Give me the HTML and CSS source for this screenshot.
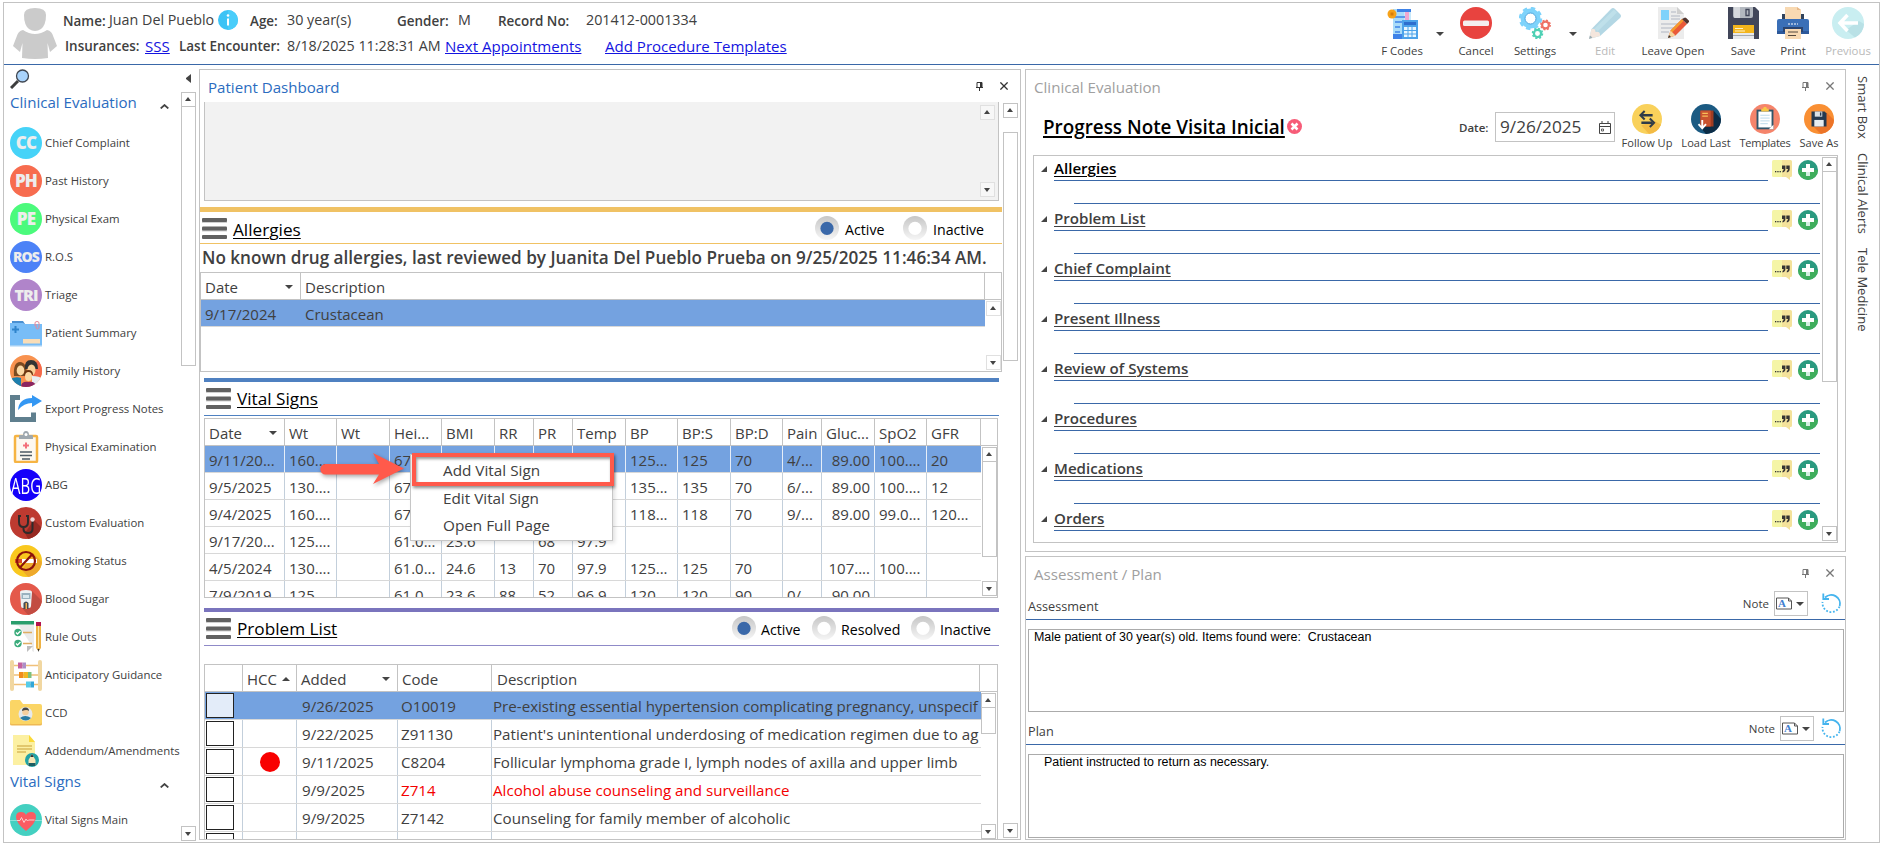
FILE: index.html
```html
<!DOCTYPE html>
<html lang="en">
<head>
<meta charset="utf-8">
<title>Patient Record</title>
<link rel="stylesheet" href="styles.css">
</head>
<body>
<svg width="0" height="0" class="defs">
  <defs>
    <linearGradient id="rg" x1="0" y1="0" x2="0" y2="1"><stop offset="0" stop-color="#c6c6c6"/><stop offset="1" stop-color="#f6f6f6"/></linearGradient>
    <clipPath id="cc"><circle cx="16" cy="16" r="16"/></clipPath>
    <symbol id="pin" viewBox="0 0 7 9"><path d="M1 .5h5v5H1zM0 5.5h7M3.5 5.5V9" fill="none" stroke="currentColor"/><path d="M4 0h2v5H4z" fill="currentColor"/></symbol>
    <symbol id="x" viewBox="0 0 8 8"><path d="M.4.4l7.2 7.2M7.6.4L.4 7.6" stroke="currentColor" stroke-width="1.3"/></symbol>
    <symbol id="ham" viewBox="0 0 25 21"><g fill="#d0d0d0"><rect y="3" width="25" height="2"/><rect y="11.5" width="25" height="2"/></g><g fill="#616161"><rect width="25" height="4" rx="1"/><rect y="8.5" width="25" height="4" rx="1"/><rect y="17" width="25" height="4" rx="1"/></g></symbol>
    <symbol id="on" viewBox="0 0 24 24"><circle cx="12" cy="12" r="12" fill="url(#rg)"/><circle cx="12" cy="12.4" r="6.6" fill="#3a68a9"/></symbol>
    <symbol id="off" viewBox="0 0 24 24"><circle cx="12" cy="12" r="12" fill="url(#rg)"/><circle cx="12" cy="12.4" r="6.6" fill="#fff"/></symbol>
    <symbol id="note" viewBox="0 0 20 20"><path d="M1.5 0H10v17H1.500Q0 17 0 15.500V1.500Q0 0 1.500 0z" fill="#f5f5a6"/><path d="M10 0h8.500Q20 0 20 1.500v14Q20 17 18.500 17H18v3l-4-3h-4z" fill="#f4e29b"/><g fill="#333"><rect x="3" y="11" width="1.300" height="1.300"/><rect x="5.300" y="11" width="1.300" height="1.300"/><rect x="7.600" y="11" width="1.300" height="1.300"/><path d="M10 5.500h3.400v3.500q0 3-2.900 3.400v-1.500q1.200-.3 1.200-1.800H10zM14.300 5.500h3.400v3.500q0 3-2.900 3.400v-1.500q1.200-.3 1.200-1.800h-1.700z"/></g></symbol>
    <symbol id="plus" viewBox="0 0 20 20"><circle cx="10" cy="10" r="10" fill="#2a9a80"/><path d="M0 10a10 10 0 0 0 20 0z" fill="#3fae5c"/><path d="M8 4h4v4h4v4h-4v4H8v-4H4V8h4z" fill="#fff"/><path d="M8 12h4v4H8z" fill="#d5efe0"/></symbol>
    <symbol id="undo" viewBox="0 0 21 21"><path d="M4 4.500A8.800 8.800 0 0 1 18.700 13" fill="none" stroke="#45b4ee" stroke-width="1.800"/><path d="M18.500 13.500A8.800 8.800 0 0 1 1.600 9" fill="none" stroke="#45b4ee" stroke-width="1.800" stroke-dasharray="1.800 1.700"/><path d="M2.300.500V6H8" fill="none" stroke="#45b4ee" stroke-width="1.800"/></symbol>
    <symbol id="doc" viewBox="0 0 16 12"><path d="M.5.500h12l3 3v8H.500z" fill="#fff" stroke="#555"/><path d="M12.500.500v3h3" fill="none" stroke="#555"/></symbol>
  </defs>
</svg>

<div class="frame">
  <header class="top">
    <svg class="avatar" viewBox="0 0 44 51"><path d="M11 7Q11 0 22 0t11 7q0 10-5 14-6 4-12 0-5-4-5-14z" fill="#cbcbcb"/><path d="M10 22q12 8 24 0 5 1 6.500 7L44 38l-7 6-2.500-9 .5 15q-13 2-26 0l.5-15L7 44l-7-6 3.500-9Q5 23 10 22z" fill="#cbcbcb"/></svg>
    <div class="who">
      <div class="wline l1">
        <b class="n1">Name:</b><span class="n2">Juan Del Pueblo</span>
        <svg class="info" viewBox="0 0 20 20"><circle cx="10" cy="10" r="10" fill="#3cc3f5"/><path d="M10 0a10 10 0 0 1 0 20z" fill="#49cdfa"/><circle cx="10" cy="5.500" r="1.300" fill="#fff"/><path d="M9 8.500h2v7H9z" fill="#fff"/></svg>
        <b class="n3">Age:</b><span class="n4">30 year(s)</span><b class="n5">Gender:</b><span class="n6">M</span><b class="n7">Record No:</b><span class="n8">201412-0001334</span>
      </div>
      <div class="wline l2">
        <b class="m1">Insurances:</b><a class="m2">SSS</a><b class="m3">Last Encounter:</b><span class="m4">8/18/2025 11:28:31 AM</span><a class="m5">Next Appointments</a><a class="m6">Add Procedure Templates</a>
      </div>
    </div>
    <nav class="tools">
      <div class="tool t1"><svg viewBox="0 0 32 32"><path d="M7 2h18v30H7z" fill="#c7e9fb"/><path d="M7 2h11v28H7z" fill="#a9dcf9"/><path d="M11 2h14v3H11z" fill="#3e82e8"/><path d="M9 10h10M9 15h8M9 20h5M9 25h5" stroke="#3e82e8" stroke-width="1.500"/><path d="M19 5h4v10h-4z" fill="#f0a7d0"/><path d="M7 27h10v5H7z" fill="#3e82e8"/><circle cx="6" cy="7" r="4.500" fill="#f6a21a"/><path d="M4.500 5.500h3v3h-3z" fill="#d97d06"/><path d="M16 13h16v19H16z" fill="#4da3ea"/><path d="M18 15h12v3H18z" fill="#2e6fce"/><path d="M18 20h12v10H18z" fill="#e8f7ff"/><path d="M22 20v10M26 20v10M18 23.500h12M18 27h12" stroke="#4da3ea"/></svg><span>F Codes</span></div>
      <i class="dd"></i>
      <div class="tool t2"><svg viewBox="0 0 32 32"><circle cx="16" cy="16" r="16" fill="#e8433f"/><rect x="3" y="13.500" width="26" height="5.500" rx="1.500" fill="#f4efef"/></svg><span>Cancel</span></div>
      <div class="tool t3"><svg viewBox="0 0 32 32"><circle cx="11.500" cy="11.500" r="7.500" fill="none" stroke="#7ed3fb" stroke-width="5"/><circle cx="11.500" cy="11.500" r="10.300" fill="none" stroke="#7ed3fb" stroke-width="2.800" stroke-dasharray="4.400 3.690"/><circle cx="11.500" cy="11.500" r="5.500" fill="#fff" stroke="#4ea4dd"/><circle cx="26.500" cy="18" r="3.400" fill="none" stroke="#ee7164" stroke-width="2.200"/><circle cx="26.500" cy="18" r="4.700" fill="none" stroke="#ee7164" stroke-width="1.500" stroke-dasharray="1.900 1.791"/><circle cx="18.500" cy="26.500" r="3.600" fill="none" stroke="#4ed0b4" stroke-width="2.300"/><circle cx="18.500" cy="26.500" r="5" fill="none" stroke="#4ed0b4" stroke-width="1.500" stroke-dasharray="2 1.927"/></svg><span>Settings</span></div>
      <i class="dd"></i>
      <div class="tool t4 off"><svg viewBox="0 0 32 32"><path d="M0 32l2.500-10L22 2q2-2 4 0l5 5q2 2 0 4L11 29z" fill="#b3d7e4"/><path d="M5 22L25 2.500l3 3L9 24z" fill="#bfe0ea"/><path d="M0 32l2.500-10q4-1 4 3 5-1 4.500 4z" fill="#f4e6dd"/><path d="M0 32l1-3.500 2.500 2z" fill="#9badb5"/></svg><span>Edit</span></div>
      <div class="tool t5"><svg viewBox="0 0 32 32"><path d="M1 0h19l7 7v25H1z" fill="#ececec"/><path d="M20 0l7 7h-7z" fill="#cfcfcf"/><path d="M4 3h8v10H4z" fill="#7fd2fb"/><path d="M14 5h5M14 9h9M14 12h9M4 17h18M4 21h14M4 25h8" stroke="#c3c7cf" stroke-width="1.300"/><path d="M11 31l2.500-7.500L25 12l5 5-11.500 11.500z" fill="#ea5a3a"/><path d="M13.500 23.500L25 12l1.700 1.700L15 25.500z" fill="#f59b2c"/><path d="M25 12l2-1q1-1 2.200 0l2.300 2.300q1.200 1 0 2.300L30 17z" fill="#50342f"/><path d="M11 31l2.500-7.500 5 5z" fill="#f6d59b"/><path d="M11 31l1-3 2 2z" fill="#333"/></svg><span>Leave Open</span></div>
      <div class="tool t6"><svg viewBox="0 0 32 32"><path d="M1 0h27l4 4v28H1z" fill="#414659"/><path d="M6 0h20v9q0 2-2 2H8q-2 0-2-2z" fill="#b3b8bf"/><path d="M7 0h6v11H8q-1 0-1-1z" fill="#d6d9dd"/><path d="M19 2.500h3v6h-3z" fill="none" stroke="#414659" stroke-width="1.300"/><path d="M6 18h21v8H6z" fill="#f3b51c"/><path d="M8 21.500h8M8 24h10" stroke="#fff3c8" stroke-width="1"/><path d="M6 26h21v6H6z" fill="#e7e9ec"/><path d="M6 28h21v1H6z" fill="#a5a9b0"/></svg><span>Save</span></div>
      <div class="tool t7"><svg viewBox="0 0 32 32"><path d="M8 0h12l4 3v10H8z" fill="#f8d9b2"/><path d="M20 0l4 3h-4z" fill="#e8b98a"/><path d="M5 7h3v6H5zM24 7h3v6h-3z" fill="#31435c"/><path d="M2 12h28q2 0 2 2v13H0V14q0-2 2-2z" fill="#3a6fb7"/><path d="M0 24h32v3H0z" fill="#2d589a"/><path d="M6 20h20v5H6z" fill="#2a4470"/><path d="M11 17h10" stroke="#fff" stroke-dasharray="2 1"/><path d="M8 22h16v10H8z" fill="#f8d9b2"/><path d="M11 25h10M11 28.500h8" stroke="#54493f" stroke-width="1"/></svg><span>Print</span></div>
      <div class="tool t8 off"><svg viewBox="0 0 32 32"><circle cx="16" cy="16" r="16" fill="#c9eef1"/><path d="M14 23l9 7.500A16 16 0 0 0 32 17l-5-3z" fill="#b9e1e6"/><path d="M26 16H8M15.500 8L8 16l7.500 8" fill="none" stroke="#fff" stroke-width="3.500"/></svg><span>Previous</span></div>
    </nav>
  </header>

  <main class="main">
    <aside class="side">
      <div class="list">
        <svg class="mag" viewBox="0 0 20 20"><path d="M1 19l7-7" stroke="#3d3d3d" stroke-width="3"/><circle cx="12.500" cy="7" r="6" fill="#a9d3fb" stroke="#3f4650" stroke-width="1.300"/></svg>
        <div class="sh h1"><span>Clinical Evaluation</span><svg viewBox="0 0 9 5"><path d="M.7 4.500L4.500 1l3.800 3.500" fill="none" stroke="#444" stroke-width="1.700"/></svg></div>
        <div class="it"><em class="ba c1">CC</em>Chief Complaint</div>
        <div class="it"><em class="ba c2">PH</em>Past History</div>
        <div class="it"><em class="ba c3">PE</em>Physical Exam</div>
        <div class="it"><em class="ba c4">ROS</em>R.O.S</div>
        <div class="it"><em class="ba c5">TRI</em>Triage</div>
        <div class="it"><svg viewBox="0 0 32 32"><path d="M2 4h11l2 3H2z" fill="#4a90d2"/><path d="M0 6h13l2 1h17v22H0z" fill="#78bdf7"/><path d="M0 28h32v1.500H0z" fill="#a4d0f5"/><path d="M2 12.500h7M5.500 9v7" stroke="#2f84cc" stroke-width="2"/><path d="M13 22h17v4.500H13z" fill="#f9ddb7"/><path d="M25 9V6q0-1.500 2-1.500T29 6v4q0 2-1.500 2T26 10V7" fill="none" stroke="#e8899a"/></svg>Patient Summary</div>
        <div class="it"><svg viewBox="0 0 32 32"><g clip-path="url(#cc)"><path d="M0 0h32v32H0z" fill="#f8924f"/><path d="M32 0v22H14z" fill="#f5694b"/><path d="M0 24q6-3 11-1v9H0z" fill="#1c7fae"/><path d="M22 21q8 0 10 3v8H22z" fill="#e8eef2"/><path d="M4 21q-1-14 6-14t7 14z" fill="#7b4a20"/><ellipse cx="10.500" cy="15.500" rx="3.800" ry="5" fill="#fbd9a4"/><path d="M15 14q-1-9 6-9t7 9z" fill="#333"/><ellipse cx="21.500" cy="15" rx="4" ry="5.500" fill="#f9cf96"/><path d="M14 20q0-5 4.500-5t4.500 5z" fill="#6b3510"/><ellipse cx="18.500" cy="21.500" rx="3.500" ry="4.500" fill="#fbd9a4"/><path d="M11 32q0-6 7.500-5 7-1 7.500 5z" fill="#8c2561"/></g></svg>Family History</div>
        <div class="it"><svg viewBox="0 0 32 32"><path d="M10 4.500H2.500v22h21v-7" fill="none" stroke="#5f7f8e" stroke-width="5"/><path d="M8 17Q9 5 22 5V2l10 6-10 6v-4q-8 0-14 7z" fill="#3397f3"/></svg>Export Progress Notes</div>
        <div class="it"><svg viewBox="0 0 32 32"><rect x="5" y="5" width="22" height="26" rx="1" fill="#fdf8f0" stroke="#f6b443" stroke-width="2.500"/><path d="M9 8V5q0-1 1-1h3q0-4 3-4t3 4h3q1 0 1 1v3z" fill="#9fa8ae"/><circle cx="16" cy="3.500" r="1.500" fill="#fff"/><path d="M13 14.500h6M16 11.500v6" stroke="#f3707a" stroke-width="2"/><path d="M10 21h12M10 24.500h12M12 28h8" stroke="#4d5a63" stroke-width="1.300"/></svg>Physical Examination</div>
        <div class="it"><em class="ba c6"><span>ABG</span></em>ABG</div>
        <div class="it"><svg viewBox="0 0 32 32"><g clip-path="url(#cc)"><path d="M0 0h32v32H0z" fill="#bd3a30"/><path d="M24 13l8 8v11H18l-3-6z" fill="#962922"/></g><path d="M11 9H9v6q0 5 4.500 5T18 15V9h-2M13.500 20v2q0 4 4.500 4t4.500-4v-8" fill="none" stroke="#2f2b2b" stroke-width="2"/><circle cx="22.500" cy="12.500" r="2.200" fill="#f2d5d5"/></svg>Custom Evaluation</div>
        <div class="it"><svg viewBox="0 0 32 32"><g clip-path="url(#cc)"><path d="M0 0h32v32H0z" fill="#f9c81f"/><path d="M23 8l9 9v15H18l-6-7z" fill="#eea92c"/></g><path d="M5 14h7v4H5z" fill="#d94a25"/><path d="M12 14h15v4H12z" fill="#fff"/><circle cx="16" cy="16" r="9" fill="none" stroke="#8c130b" stroke-width="2.200"/><path d="M22 9.500L10 22.500" stroke="#8c130b" stroke-width="2.200"/></svg>Smoking Status</div>
        <div class="it"><svg viewBox="0 0 32 32"><g clip-path="url(#cc)"><path d="M0 0h32v32H0z" fill="#e4594b"/><path d="M22 8l10 10v14H18l-6-7z" fill="#c24c42"/></g><path d="M10 9q0-2 6-2t6 2l-1 14q0 2-2 2h-6q-2 0-2-2z" fill="#eef1f3"/><path d="M11.500 10h9v6h-9z" fill="#99b1bf"/><path d="M13 12h6v3h-6z" fill="#dbe8ee"/><path d="M13.500 26v-6q2.500-3 5 0v6z" fill="#454b53"/><path d="M15.500 20h1.500v6h-1.500z" fill="#f4b04e"/></svg>Blood Sugar</div>
        <div class="it"><svg viewBox="0 0 32 32"><path d="M2 3h22v28l-2-1V25L9 5z" fill="#ebebeb"/><path d="M1 0h23v3.500H1z" fill="#2a9e6d"/><circle cx="8" cy="11.500" r="3.700" fill="#3bac7c"/><circle cx="8" cy="22.500" r="3.700" fill="#3bac7c"/><path d="M6 11.500l1.500 1.500 3-3M6 22.500L7.500 24l3-3" fill="none" stroke="#fff" stroke-width="1.300"/><path d="M13 11.500h9M13 22.500h9" stroke="#e0ad61" stroke-width="1.500"/><path d="M17 25h6l-6 6z" fill="#bdbdbd"/><path d="M26 5h5v22l-2.500 3L26 27z" fill="#eeb244"/><path d="M28 5h1v22h-1z" fill="#fbe3a2"/><path d="M26 1h5v4h-5z" fill="#b4144f"/><path d="M27.500 28h2l-1 3z" fill="#333"/></svg>Rule Outs</div>
        <div class="it"><svg viewBox="0 0 32 32"><path d="M3 6.500h26M3 16h26M3 25.500h26" stroke="#f0c079" stroke-width="1.500"/><rect y="1" width="4" height="31" rx="2" fill="#f1d7a1"/><rect x="28" y="1" width="4" height="31" rx="2" fill="#f1d7a1"/><path d="M8 3.500h4.500v6H8z" fill="#c5619f"/><path d="M12.500 3.500H16v6h-3.500z" fill="#ad8fc8"/><path d="M9 13h4.500v6H9z" fill="#f08c1e"/><path d="M13.500 13H18v6h-4.500z" fill="#f2b722"/><path d="M18 13h3.500v6H18z" fill="#7dc07e"/><path d="M16 22.500h4.500v6H16z" fill="#57cbe8"/><path d="M20.500 22.500H24v6h-3.500z" fill="#33a7d8"/></svg>Anticipatory Guidance</div>
        <div class="it"><svg viewBox="0 0 32 32"><path d="M0 5q0-2 2-2h8l3 4h17q2 0 2 2v17q0 2-2 2H2q-2 0-2-2z" fill="#fbd565"/><path d="M0 25q0 2 2 2h28q2 0 2-2v2q0 1.500-2 1.500H2Q0 28.500 0 27z" fill="#eeb954"/><circle cx="15.500" cy="17" r="7" fill="#e6e8ea"/><path d="M10 21q5-4 11 0-5 5-11 0z" fill="#2b7ba3"/><circle cx="15.500" cy="15" r="3.300" fill="#f7cf9e"/><path d="M12 14q0-3.500 3.500-3.500T19 14q-2-2-7 0z" fill="#444"/></svg>CCD</div>
        <div class="it"><svg viewBox="0 0 32 32"><path d="M3 0h16l6 7v23H3z" fill="#fcf0a2"/><path d="M19 0l6 7h-6z" fill="#fbd937"/><path d="M7 11h15M7 14h15M7 17h9" stroke="#d9bb5c" stroke-width="1.400"/><circle cx="22" cy="25" r="7" fill="#22a3a6"/><path d="M22 19l3.500 6v6h-7v-6z" fill="#f6e6b6"/><path d="M22 19l1.700 3h-3.400z" fill="#333"/><path d="M18.500 28h7v3h-7z" fill="#1b5d62"/></svg>Addendum/Amendments</div>
        <div class="sh h2"><span>Vital Signs</span><svg viewBox="0 0 9 5"><path d="M.7 4.500L4.500 1l3.800 3.500" fill="none" stroke="#444" stroke-width="1.700"/></svg></div>
        <div class="it last"><svg viewBox="0 0 32 32"><circle cx="16" cy="16" r="16" fill="#44d0c1"/><path d="M0 16.500h32" stroke="#8be3da"/><path d="M16 27Q6 19 6 13q0-5 5-5 4 0 5 3 1-3 5-3 5 0 5 5 0 6-10 14z" fill="#fb5b62"/><path d="M7 16.500h3l1.500-3 2.500 5 2-3.500 1.500 2 1-1h6" fill="none" stroke="#fbd0d0"/></svg>Vital Signs Main</div>
      </div>
      <div class="sscroll"><i class="tri-l"></i><div class="sb sb1"><i class="up"></i><i class="th"></i><i class="sp"></i><i class="dn"></i></div></div>
    </aside>

    <section class="panel dash">
      <div class="ttl blue"><span>Patient Dashboard</span><svg class="pin"><use href="#pin"/></svg><svg class="x"><use href="#x"/></svg></div>
      <div class="dbody">
        <div class="dcol">
          <div class="gray"><div class="sb lt"><i class="up"></i><i class="sp"></i><i class="dn"></i></div></div>

          <div class="sec al">
            <div class="shd"><svg class="ham"><use href="#ham"/></svg><span class="st">Allergies</span>
              <svg class="rd r1"><use href="#on"/></svg><span class="rl">Active</span><svg class="rd r2"><use href="#off"/></svg><span class="rl">Inactive</span></div>
            <div class="nka">No known drug allergies, last reviewed by Juanita Del Pueblo Prueba on 9/25/2025 11:46:34 AM.</div>
            <div class="grid ga">
              <div class="gr gh"><span>Date<i class="ar d"></i></span><span>Description</span><span class="e"></span></div>
              <div class="gbody"><div class="gmain"><div class="gr sel"><span>9/17/2024</span><span>Crustacean</span></div></div>
              <div class="sb lt"><i class="up"></i><i class="sp"></i><i class="dn"></i></div></div>
            </div>
          </div>

          <div class="sec vi">
            <div class="shd"><svg class="ham"><use href="#ham"/></svg><span class="st">Vital Signs</span></div>
            <div class="grid gv">
              <div class="gr gh"><span>Date<i class="ar d"></i></span><span>Wt</span><span>Wt</span><span>Hei...</span><span>BMI</span><span>RR</span><span>PR</span><span>Temp</span><span>BP</span><span>BP:S</span><span>BP:D</span><span>Pain</span><span>Gluc...</span><span>SpO2</span><span>GFR</span><span class="e"></span></div>
              <div class="gbody"><div class="gmain">
                <div class="gr sel"><span>9/11/20...</span><span>160....</span><span></span><span>67</span><span></span><span></span><span></span><span></span><span>125...</span><span>125</span><span>70</span><span>4/...</span><span class="r">89.00</span><span>100....</span><span>20</span></div>
                <div class="gr"><span>9/5/2025</span><span>130....</span><span></span><span>67</span><span></span><span></span><span></span><span></span><span>135...</span><span>135</span><span>70</span><span>6/...</span><span class="r">89.00</span><span>100....</span><span>12</span></div>
                <div class="gr"><span>9/4/2025</span><span>160....</span><span></span><span>67</span><span></span><span></span><span></span><span></span><span>118...</span><span>118</span><span>70</span><span>9/...</span><span class="r">89.00</span><span>99.0...</span><span>120...</span></div>
                <div class="gr"><span>9/17/20...</span><span>125....</span><span></span><span>61.0...</span><span>23.6</span><span></span><span>68</span><span>97.9</span><span></span><span></span><span></span><span></span><span></span><span></span><span></span></div>
                <div class="gr"><span>4/5/2024</span><span>130....</span><span></span><span>61.0...</span><span>24.6</span><span>13</span><span>70</span><span>97.9</span><span>125...</span><span>125</span><span>70</span><span></span><span class="r">107....</span><span>100....</span><span></span></div>
                <div class="gr"><span>7/9/2019</span><span>125....</span><span></span><span>61.0...</span><span>23.6</span><span>88</span><span>52</span><span>96.9</span><span>120...</span><span>120</span><span>90</span><span>0/...</span><span class="r">90.00</span><span></span><span></span></div>
              </div>
              <div class="sb"><i class="up"></i><i class="th"></i><i class="sp"></i><i class="dn"></i></div></div>
              <div class="menu"><div>Add Vital Sign</div><div>Edit Vital Sign</div><div>Open Full Page</div></div>
              <div class="hl"></div>
              <svg class="arrow" viewBox="0 0 86 36"><path d="M6.500 12H60L54 1l31 15.500L54 32l6-9.500H6.500a5.250 5.250 0 0 1 0-10.500z" fill="#ff5a4b"/></svg>
            </div>
          </div>

          <div class="sec pr">
            <div class="shd"><svg class="ham"><use href="#ham"/></svg><span class="st">Problem List</span>
              <svg class="rd r1"><use href="#on"/></svg><span class="rl a">Active</span><svg class="rd r2"><use href="#off"/></svg><span class="rl b">Resolved</span><svg class="rd r3"><use href="#off"/></svg><span class="rl">Inactive</span></div>
            <div class="grid gp">
              <div class="gr gh"><span></span><span>HCC<i class="ar u"></i></span><span>Added<i class="ar d"></i></span><span>Code</span><span>Description</span><span class="e"></span></div>
              <div class="gbody"><div class="gmain">
                <div class="gr sel"><span><i class="cb"></i></span><span></span><span>9/26/2025</span><span>O10019</span><span>Pre-existing essential hypertension complicating pregnancy, unspecif</span></div>
                <div class="gr"><span><i class="cb"></i></span><span></span><span>9/22/2025</span><span>Z91130</span><span>Patient's unintentional underdosing of medication regimen due to ag</span></div>
                <div class="gr"><span><i class="cb"></i></span><span><i class="dot"></i></span><span>9/11/2025</span><span>C8204</span><span>Follicular lymphoma grade I, lymph nodes of axilla and upper limb</span></div>
                <div class="gr red"><span><i class="cb"></i></span><span></span><span class="k">9/9/2025</span><span>Z714</span><span>Alcohol abuse counseling and surveillance</span></div>
                <div class="gr"><span><i class="cb"></i></span><span></span><span>9/9/2025</span><span>Z7142</span><span>Counseling for family member of alcoholic</span></div>
                <div class="gr"><span><i class="cb"></i></span><span></span><span></span><span></span><span></span></div>
              </div>
              <div class="sb"><i class="up"></i><i class="th"></i><i class="sp"></i><i class="dn"></i></div></div>
            </div>
          </div>
        </div>
        <div class="sb dsb"><i class="up"></i><i class="th"></i><i class="sp"></i><i class="dn"></i></div>
      </div>
    </section>

    <div class="right">
      <section class="panel ev">
        <div class="ttl"><span>Clinical Evaluation</span><svg class="pin"><use href="#pin"/></svg><svg class="x"><use href="#x"/></svg></div>
        <div class="ehead">
          <span class="pn">Progress Note Visita Inicial</span>
          <svg class="del" viewBox="0 0 15 15"><circle cx="7.500" cy="7.500" r="7.500" fill="#f75c78"/><path d="M4.500 4.500l6 6M10.500 4.500l-6 6" stroke="#fff" stroke-width="2.500"/></svg>
          <span class="dl">Date:</span>
          <span class="din">9/26/2025<svg viewBox="0 0 12 13"><path d="M.5 2.500h11v10H.500zM.5 5.500h11M3 0v3M9 0v3" fill="none" stroke="#444"/><path d="M2.500 8h2v2h-2z" fill="none" stroke="#444" stroke-width=".8"/></svg></span>
          <div class="eb e1"><svg viewBox="0 0 32 32"><circle cx="16" cy="16" r="16" fill="#f9d15b"/><path d="M24 18l7 4q-4 9-13 10l-8-9z" fill="#f3bb44"/><path d="M10 12h12M10 20h12" stroke="#2f3b48" stroke-width="2.500"/><path d="M13.500 7.500L9 12l4.500 4.500M19 15.500l4.500 4.500-4.500 4.500" fill="none" stroke="#2f3b48" stroke-width="2.200"/></svg><span>Follow Up</span></div>
          <div class="eb e2"><svg viewBox="0 0 32 32"><circle cx="16" cy="16" r="16" fill="#1b5a82"/><path d="M24 7l8 9A16 16 0 0 1 16 32l-6-7z" fill="#0c2c46"/><path d="M10 7h14v17H10z" fill="#a03c22"/><path d="M10 7h11v17H10z" fill="#c9532f"/><path d="M12 10h6M12 13h6" stroke="#f6bf5a" stroke-width="1.300"/><path d="M12 17v8M8 21.500l4 4.500 4-4.500" fill="none" stroke="#fff" stroke-width="2"/></svg><span>Load Last</span></div>
          <div class="eb e3"><svg viewBox="0 0 32 32"><circle cx="16" cy="16" r="16" fill="#f5846b"/><path d="M7 6h18v21H7z" fill="#31556b"/><path d="M9 8h14v17H9z" fill="#fff"/><path d="M11 12h10M11 15h10M11 18h10M11 21h8" stroke="#b9d9ea"/><path d="M12 8V5h2q0-2 2-2t2 2h2v3z" fill="#f9c846"/><path d="M20 27l5-5v5z" fill="#fff"/></svg><span>Templates</span></div>
          <div class="eb e4"><svg viewBox="0 0 32 32"><circle cx="16" cy="16" r="16" fill="#f98f33"/><path d="M24 9l8 8A16 16 0 0 1 18 32l-9-9z" fill="#ec7428"/><path d="M8 8h14l2 2v14H8z" fill="#26394f"/><path d="M11.500 8h8v5.500h-8z" fill="#d9e0e6"/><path d="M17 9h1.500v3.500H17z" fill="#26394f"/><path d="M11 17h10v7H11z" fill="#e8edf0"/></svg><span>Save As</span></div>
        </div>
        <div class="tree">
          <div class="rows">
            <div class="nd"><div class="nr"><i class="tg"></i><b class="blk">Allergies</b><svg><use href="#note"/></svg><svg><use href="#plus"/></svg></div></div>
            <div class="nd"><div class="nr"><i class="tg"></i><b>Problem List</b><svg><use href="#note"/></svg><svg><use href="#plus"/></svg></div></div>
            <div class="nd"><div class="nr"><i class="tg"></i><b>Chief Complaint</b><svg><use href="#note"/></svg><svg><use href="#plus"/></svg></div></div>
            <div class="nd"><div class="nr"><i class="tg"></i><b>Present Illness</b><svg><use href="#note"/></svg><svg><use href="#plus"/></svg></div></div>
            <div class="nd"><div class="nr"><i class="tg"></i><b>Review of Systems</b><svg><use href="#note"/></svg><svg><use href="#plus"/></svg></div></div>
            <div class="nd"><div class="nr"><i class="tg"></i><b>Procedures</b><svg><use href="#note"/></svg><svg><use href="#plus"/></svg></div></div>
            <div class="nd"><div class="nr"><i class="tg"></i><b>Medications</b><svg><use href="#note"/></svg><svg><use href="#plus"/></svg></div></div>
            <div class="nd"><div class="nr"><i class="tg"></i><b>Orders</b><svg><use href="#note"/></svg><svg><use href="#plus"/></svg></div></div>
          </div>
          <div class="sb"><i class="up"></i><i class="th"></i><i class="sp"></i><i class="dn"></i></div>
        </div>
      </section>

      <section class="panel ap">
        <div class="ttl"><span>Assessment / Plan</span><svg class="pin"><use href="#pin"/></svg><svg class="x"><use href="#x"/></svg></div>
        <div class="arow"><span class="an">Assessment</span><span class="nt">Note</span><span class="nb"><span class="dA"><svg><use href="#doc"/></svg><em>A</em></span><i class="ar d"></i></span><svg class="undo"><use href="#undo"/></svg></div>
        <div class="box b1">Male patient of 30 year(s) old. Items found were:&nbsp; Crustacean</div>
        <div class="arow p2"><span class="an">Plan</span><span class="nt">Note</span><span class="nb"><span class="dA"><svg><use href="#doc"/></svg><em>A</em></span><i class="ar d"></i></span><svg class="undo"><use href="#undo"/></svg></div>
        <div class="box b2">Patient instructed to return as necessary.</div>
      </section>
    </div>

    <div class="vtabs"><span>Smart Box</span><span>Clinical Alerts</span><span>Tele Medicine</span></div>
  </main>
</div>
</body>
</html>
```
FILE: styles.css
```css
*{box-sizing:border-box}
body{margin:0;width:1887px;height:846px;overflow:hidden;background:#fff;font-family:"Open Sans","Noto Sans",sans-serif;color:#404040;font-size:15px;line-height:20px;white-space:nowrap}
.defs{position:absolute}
svg{display:block;flex:none}
i,em{font-style:normal}
.frame{margin:2px 0 0 3px;width:1877px;height:841px;border:1px solid #c3c3c3;display:flex;flex-direction:column}

/* header */
.top{height:62px;border-bottom:1px solid #3a68a8;display:flex;flex:none}
.avatar{width:44px;height:51px;margin:5px 0 0 9px}
.who{width:780px;margin-left:6px}
.wline{display:flex;height:20px;font-size:14.300px;line-height:20px}
.wline>*{flex:none}
.wline b{font-weight:600;font-size:13.450px}
.wline a{color:#1414e0;text-decoration:underline;font-size:15.050px}
.l1{margin-top:7px}
.l2{margin-top:6px}
.l1 b{padding-top:1px}
.n1{width:46px}
.n2{width:109px}
.info{width:20px;height:20px;margin-top:0}
.n3{width:37px;margin-left:12px}
.n4{width:110px}
.n5{width:61px}
.n6{width:40px}
.n7{width:88px}
.m1{width:80px;margin-left:2px}
.m2{width:34px}
.m3{width:108px}
.m4{width:158px}
.m5{width:160px}
.tools{margin-left:auto;display:flex;width:504px;font-size:11.400px}
.tool{width:32px;display:flex;flex-direction:column;align-items:center;padding-top:4px;flex:none}
.tool svg{width:32px;height:32px}
.tool span{line-height:16px;margin-top:4px}
.tool.off span{color:#b9b9b9}
.t1{margin-left:11px}
.t2{margin-left:16px}
.t3{margin-left:27px}
.t4{margin-left:12px}
.t5{margin-left:36px}
.t6{margin-left:38px}
.t7{margin-left:18px}
.t8{margin-left:23px}
.dd{border:4px solid transparent;border-top-color:#444;border-bottom:0;height:4px;margin:29px 0 0 18px}

.main{display:grid;grid-template-columns:195px 826px 821px 33px;height:777px}
.dash{width:822px}

/* scroll bars */
.sb{width:15px;display:flex;flex-direction:column;flex:none}
.sb i{display:block;border:1px solid #c3c3c3;background:#fff}
.sb .sp{flex:1;border:0;background:none}
.up,.dn{height:15px;flex:none;position:relative}
.up:after,.dn:after{content:"";position:absolute;left:3px;top:4px;border:3.500px solid transparent}
.up:after{border-bottom:4px solid #444;border-top:0}
.dn:after{border-top:4px solid #444;border-bottom:0;top:5px}
.sb.lt i{border-color:#e0e0e0}
.sb .th{border-top:0;flex:none}

/* sidebar */
.side{display:flex}
.list{width:177px;overflow:hidden;height:777px}
.mag{width:20px;height:20px;margin:4px 0 0 6px}
.sh{display:flex;color:#2b6cc0;font-size:15.100px;justify-content:space-between;padding:0 12px 0 6px;height:24px;line-height:24px}
.sh svg{width:9px;height:5px;margin-top:14px}
.h1{margin-top:1px;height:34px}
.it{display:flex;align-items:center;height:38px;padding-left:6px;font-size:11.400px}
.it>svg,.ba{width:32px;height:32px;margin-right:3px}
.ba{border-radius:50%;display:flex;align-items:center;justify-content:center;color:#ededed;font-weight:800;font-size:17px;letter-spacing:-.9px;flex:none}
.c1{background:#46d3f8}
.c2{background:#f76c4f}
.c3{background:#4bfa7c}
.c4{background:#4c82f7;font-size:14px}
.c5{background:#b084ca;font-size:16px}
.c6{background:#1500fa;font-size:22px;font-weight:400;letter-spacing:0;color:#fff}
.c6 span{transform:scaleX(.68);flex:none}
.h2{margin-top:-1px;height:32px}
.sscroll{width:15px;display:flex;flex-direction:column}
.tri-l{border:4.500px solid transparent;border-right:5px solid #444;border-left:0;width:5px;margin:9px 0 0 5px;height:9px}
.sb1{margin-top:9px;flex:1;padding-bottom:1px}
.sb1 .th{height:259px}

/* panels */
.panel{border:1px solid #c3c3c3;margin-top:4px}
.dash{height:771px;overflow:hidden}
.ttl{display:flex;height:32px;padding:6px 11px 0 8px;color:#a0a0a0;font-size:15.100px}
.ttl.blue{color:#2b6cc0;padding-right:12px}
.ttl span{flex:1;line-height:22px}
.ttl svg{color:#777}
.ttl.blue svg{color:#333}
.pin{width:7px;height:9px;margin:6px 17px 0 0}
.x{width:8px;height:8px;margin-top:6px}
.dbody{display:flex;height:737px}
.dcol{width:803px;flex:none}
.dsb{margin:1px 0 1px 0;height:735px}
.dsb .th{margin-top:14px;height:229px;border-top:1px solid #c3c3c3}
.gray{margin-left:4px;width:795px;height:99px;background:#f2f2f2;border:1px solid #c3c3c3;border-top:0;display:flex;justify-content:flex-end;padding:3px 3px 3px 0}
.gray .sb i:not(.sp){background:#f7f7f7}

.shd{display:flex;border-bottom:1px solid}
.ham{width:25px;height:21px}
.st{font-size:17.200px;color:#000;text-decoration:underline;text-decoration-thickness:1px;text-underline-offset:2px;line-height:24px;margin-left:6px;flex:1}
.rd{width:24px;height:24px}
.rl{font-size:14.200px;color:#000;line-height:24px}
.al{margin-top:6px;border-top:5px solid #f0c264;width:802px}
.al .shd{height:32px;border-color:#f0c264;padding:4px 17px 0 2px}
.al .ham{margin-top:2px}
.al .st{margin-top:2px}
.al .rl{margin:2px 0 0 6px;width:40px}
.al .r2{margin-left:18px}
.al .rl:last-child{width:52px}
.nka{height:28px;font-size:17.140px;font-weight:600;line-height:28px;padding:0 0 0 2px}

.grid{border:1px solid #c3c3c3;position:relative;display:flex;flex-direction:column}
.gr{display:grid}
.gr span{border-right:1px solid #c3cfdb;padding:1px 0 0 4px;overflow:hidden;display:flex;align-items:center;position:relative}
.gh{height:27px;border-bottom:1px solid #c3c3c3;flex:none}
.gh span{border-color:#c3c3c3}
.gh .e{border:0}
.gbody{display:flex;flex:1;min-height:0}
.gmain{flex:none;overflow:hidden}
.gmain .gr{border-bottom:1px solid #d8d8d8}
.sel{background:#74a2e0}
.ar{border:4px solid transparent;width:8px;height:4px}
.ar.d{border-top-color:#444;border-bottom:0}
.ar.u{border-bottom-color:#444;border-top:0}
.gr .ar{position:absolute;right:7px;top:12px}
.ga{height:100px}
.ga .gr{grid-template-columns:100px 684px 1fr}
.ga .gmain{width:784px}
.ga .gmain .gr{height:27px;grid-template-columns:100px 684px}
.ga .gmain span{border:0}
.ga .sb,.gv .sb{margin:1px}

.vi{margin:6px 0 0 4px;border-top:4px solid #4f81c1;width:795px}
.vi .shd{height:34px;border-color:#4f81c1;padding:6px 0 0 2px}
.vi .st{margin-top:-1px}
.grid.gv{margin-top:2px;width:794px;height:180px}
.gv .gr{grid-template-columns:80px 52px 53px 52px 53px 39px 39px 53px 52px 53px 52px 39px 53px 52px 54px 1fr}
.gv .gmain{width:776px;height:151px}
.gv .gmain .gr{height:27px}
.gv .gmain .gr span:nth-child(15){border:0}
.gv .sel span{border-color:#e6eef8}
.gr .r{justify-content:flex-end;padding-right:4px}
.gv .sb .th{height:95px}
.menu{position:absolute;left:205px;top:35px;width:203px;height:87px;background:#fff;border:1px solid #c6c6c6;box-shadow:2px 2px 4px rgba(0,0,0,.12);padding:1px 0 0 32px}
.menu div{height:27.500px;line-height:28px;font-size:15.300px}
.hl{position:absolute;left:207px;top:34px;width:202px;height:33px;border:4px solid #ff5a4b;box-shadow:1px 2px 3px rgba(0,0,0,.45),inset 1px 2px 3px rgba(0,0,0,.4)}
.arrow{position:absolute;left:114px;top:33px;width:86px;height:36px;filter:drop-shadow(1px 2px 2px rgba(0,0,0,.35))}

.pr{margin:10px 0 0 4px;border-top:4px solid #7a74bd;width:795px}
.pr .shd{height:34px;border-color:#8f8ac8;padding:4px 8px 0 2px}
.pr .ham{margin-top:2px}
.pr .st{margin-top:1px}
.pr .rl{margin:2px 0 0 5px;width:51px}
.pr .rl.b{width:70px}
.grid.gp{margin-top:18px;width:794px;height:176px}
.gp .gr{grid-template-columns:38px 54px 101px 94px 488px 1fr}
.gp .gmain{width:776px;height:148px}
.gp .gmain .gr{height:28px;grid-template-columns:38px 54px 101px 94px 488px;font-size:15.130px}
.gp .gmain span:nth-child(3){padding-left:5px}
.gp .gmain span:nth-child(4){padding-left:3px}
.gp .gmain span:nth-child(5){padding-left:1px;border:0}
.gp .gh span:nth-child(5){padding-left:5px}
.gp .sel span{border-color:transparent}
.gp .gmain span:first-child{padding:0 0 0 1px}
.gp .gh .u{right:6px}
.cb{width:28px;height:25px;border:1.500px solid #222;background:#fff}
.sel .cb{background:#e3ecf9}
.dot{width:20px;height:20px;border-radius:50%;background:#f80000;margin-left:13px}
.red{color:#f40000}
.red .k{color:#404040}
.gp .sb{margin:1px 1px 0 0}
.gp .sb .th{height:26px}

/* clinical evaluation */
.ev{height:483px}
.ehead{display:flex;height:53px}
.pn{font-size:18.850px;font-weight:600;color:#000;text-decoration:underline;text-decoration-thickness:1.500px;text-underline-offset:2px;margin:13px 0 0 17px;line-height:24px;width:244px}
.del{width:15px;height:15px;margin-top:17px}
.dl{font-size:11.500px;font-weight:600;width:36px;margin:16px 0 0 157px}
.din{width:120px;height:30px;border:1px solid #c3c3c3;margin-top:10px;font-size:17.200px;display:flex;align-items:center;justify-content:space-between;padding:0 3px 0 4px}
.din svg{width:12px;height:13px}
.eb{width:30px;display:flex;flex-direction:column;align-items:center;font-size:11.050px;margin-top:2px}
.eb svg{width:30px;height:30px}
.eb span{line-height:16px;margin-top:1px}
.e1{margin-left:17px}
.e2{margin-left:29px}
.e3{margin-left:29px;letter-spacing:-.3px}
.e4{margin-left:24px}
.tree{margin-left:7px;width:805px;height:388px;border:1px solid #c3c3c3;display:flex}
.rows{width:788px;overflow:hidden}
.nd{height:50px;background:linear-gradient(#3a68a8,#3a68a8) 20px 24px/714px 1px no-repeat,linear-gradient(#3a68a8,#3a68a8) 40px 47px/746px 1px no-repeat}
.nd:last-child{background-size:714px 1px,0 0}
.nr{height:25px;display:flex;padding-top:4px}
.nr b{flex:1;font-weight:600;text-decoration:underline;text-decoration-thickness:1px;text-underline-offset:2px;font-size:15.100px;line-height:18px;margin-top:-1px}
.blk{color:#000}
.nr svg{width:20px;height:20px;margin-right:6px}
.nr svg:last-child{margin-right:4px}
.tg{border-left:6px solid transparent;border-bottom:6px solid #444;width:6px;height:6px;margin:6px 7px 0 7px}
.tree .sb{margin-top:1px}
.tree .th{height:210px}
.tree .sb .dn{margin-bottom:1px}

/* assessment */
.ap{height:284px}
.arow{display:flex;height:31px;border-bottom:1px solid #3a68a8;padding-right:3px}
.an{flex:1;font-size:12.700px;padding:7px 0 0 2px}
.nt{font-size:11.500px;margin:5px 5px 0 0}
.nb{width:34px;height:25px;border:1px solid #c3c3c3;margin:2px 13px 0 0;display:flex;align-items:center;padding:0 0 0 1px}
.dA{position:relative;margin-right:4px}
.dA svg{width:16px;height:13px}
.dA em{position:absolute;left:2px;top:0;font:bold 11px/13px "Liberation Serif",serif;color:#3f7fd0}
.undo{width:21px;height:21px;margin-top:4px}
.p2 .nb{margin-right:7px}
.box{margin:9px 0 0 2px;width:816px;border:1px solid #ababab;font:12.450px/15px "Liberation Sans",Arial,sans-serif;color:#000;padding:0 0 0 5px}
.b1{height:83px}
.p2{height:33px;padding-top:2px}
.b2{height:84px;padding-left:15px}

.vtabs{writing-mode:vertical-rl;display:flex;gap:14px;font-size:13px;padding:11px 0 0;line-height:32px}
```
